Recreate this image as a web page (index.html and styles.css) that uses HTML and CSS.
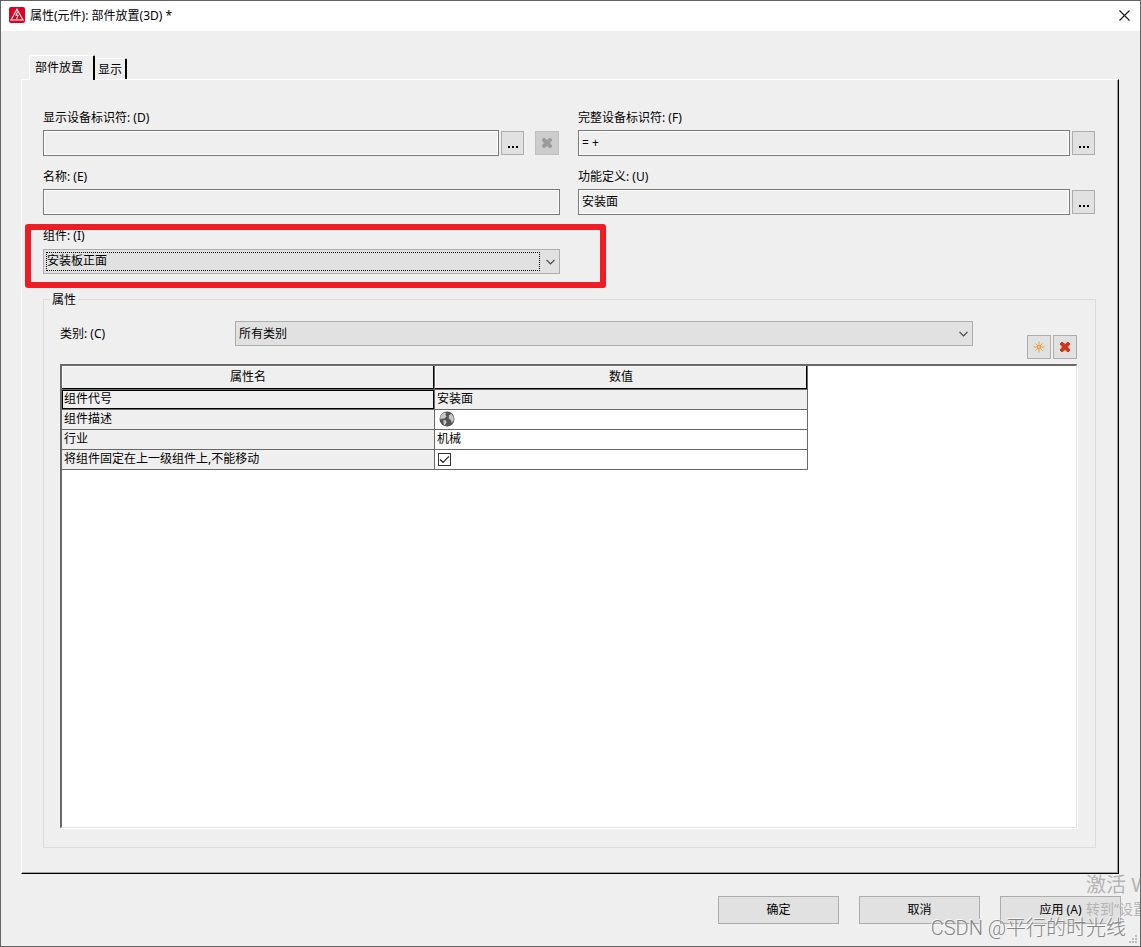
FILE: index.html
```html
<!DOCTYPE html>
<html lang="zh-CN">
<head>
<meta charset="utf-8">
<title>属性(元件): 部件放置(3D)</title>
<link rel="stylesheet" href="styles.css">
</head>
<body>
<main class="window">
  <header class="titlebar">
    <svg class="app-icon" viewBox="0 0 16 16" aria-hidden="true">
      <rect width="16" height="16" rx="2" fill="#e2001f"/>
      <path d="M8 2.2 14 13H2Z" fill="none" stroke="#fff" stroke-width="1.1"/>
      <path d="M8.800 4.500 6.800 8.300 9.200 8 7.600 12" fill="none" stroke="#fff"/>
    </svg>
    <h1 class="title">属性(元件): 部件放置(3D) *</h1>
    <button class="close" type="button" aria-label="关闭">
      <svg viewBox="0 0 11 11" aria-hidden="true"><path d="M.5.5l10 10M10.5.5l-10 10" stroke="#111" stroke-width="1.1"/></svg>
    </button>
  </header>

  <div class="tabs" role="tablist">
    <button class="tab tab-active" type="button" role="tab" aria-selected="true">部件放置</button>
    <button class="tab" type="button" role="tab" aria-selected="false">显示</button>
  </div>

  <section class="panel">
    <div class="fields">
      <div class="field">
        <label for="shown-id">显示设备标识符: (D)</label>
        <div class="control">
          <input class="textbox" id="shown-id" type="text" readonly>
          <button class="square browse" type="button" aria-label="浏览"><svg viewBox="0 0 10 2" aria-hidden="true"><path d="M0 0h2v2H0zM4 0h2v2H4zM8 0h2v2H8z"/></svg></button>
          <button class="square clear" type="button" aria-label="清除" disabled>
            <svg class="glyph" viewBox="0 0 12 12" aria-hidden="true"><path d="M3 1 6 3.5 9 1 11 3 8.5 6 11 9 9 11 6 8.5 3 11 1 9 3.5 6 1 3Z" fill="#9b9b9b" stroke="#9b9b9b"/></svg>
          </button>
        </div>
      </div>
      <div class="field">
        <label for="full-id">完整设备标识符: (F)</label>
        <div class="control">
          <input class="textbox" id="full-id" type="text" value="= +" readonly>
          <button class="square browse" type="button" aria-label="浏览"><svg viewBox="0 0 10 2" aria-hidden="true"><path d="M0 0h2v2H0zM4 0h2v2H4zM8 0h2v2H8z"/></svg></button>
        </div>
      </div>
      <div class="field">
        <label for="name">名称: (E)</label>
        <div class="control"><input class="textbox" id="name" type="text" readonly></div>
      </div>
      <div class="field">
        <label for="function">功能定义: (U)</label>
        <div class="control">
          <input class="textbox" id="function" type="text" value="安装面" readonly>
          <button class="square browse" type="button" aria-label="浏览"><svg viewBox="0 0 10 2" aria-hidden="true"><path d="M0 0h2v2H0zM4 0h2v2H4zM8 0h2v2H8z"/></svg></button>
        </div>
      </div>
      <div class="field marked">
        <label for="component">组件: (I)</label>
        <div class="control">
          <div class="dropdown dropdown-focus">
            <select id="component"><option>安装板正面</option></select>
            <svg class="chevron" viewBox="0 0 9 6" aria-hidden="true"><path d="M.5.8l4 4 4-4" fill="none" stroke="#444" stroke-width="1.2"/></svg>
          </div>
        </div>
      </div>
    </div>

    <div class="group" role="group" aria-labelledby="group-title">
      <h2 class="group-title" id="group-title">属性</h2>
      <div class="filter">
        <label for="category">类别: (C)</label>
        <div class="dropdown">
          <select id="category"><option>所有类别</option></select>
          <svg class="chevron" viewBox="0 0 9 6" aria-hidden="true"><path d="M.5.8l4 4 4-4" fill="none" stroke="#444" stroke-width="1.2"/></svg>
        </div>
        <div class="tools">
          <button class="square" type="button" aria-label="新建">
            <svg class="glyph" viewBox="0 0 12 12" aria-hidden="true"><path d="M6 .5v11M.5 6h11M2.5 2.5l7 7M9.5 2.5l-7 7" stroke="#e5a23c"/><circle cx="6" cy="6" r="2" fill="#e5a23c"/><circle cx="6" cy="6" r=".7" fill="#fff"/></svg>
          </button>
          <button class="square" type="button" aria-label="删除">
            <svg class="glyph" viewBox="0 0 12 12" aria-hidden="true"><path d="M3 1 6 3.5 9 1 11 3 8.5 6 11 9 9 11 6 8.5 3 11 1 9 3.5 6 1 3Z" fill="#cf341c" stroke="#cf341c"/></svg>
          </button>
        </div>
      </div>
      <div class="grid-box">
        <table class="props">
          <thead><tr><th scope="col">属性名</th><th scope="col">数值</th></tr></thead>
          <tbody>
            <tr><td class="key current">组件代号</td><td class="key">安装面</td></tr>
            <tr><td class="key">组件描述</td><td>
              <svg class="globe" viewBox="0 0 16 16" role="img" aria-label="多语言"><circle cx="8" cy="8" r="7.5" fill="#555"/><path d="M1.200 6 3 3 5.500 1.500 7 2 6.500 4 7.500 5.500 5.500 7.500 3.500 7.500 1.500 8.500ZM4.500 9 7 9.500 7.500 11.500 5.500 14.500 4.500 12ZM10 4 12.500 3 14.500 6 14.800 9 12.800 12 11.800 9 9.800 7.500Z" fill="#c8c8c8"/></svg>
            </td></tr>
            <tr><td class="key">行业</td><td>机械</td></tr>
            <tr><td class="key">将组件固定在上一级组件上,不能移动</td><td>
              <span class="check"><input type="checkbox" aria-label="将组件固定在上一级组件上,不能移动" checked><svg viewBox="0 0 13 13" aria-hidden="true"><path d="M2 6.500 5 9.300l6-6" fill="none" stroke="#222" stroke-width="1.2"/></svg></span>
            </td></tr>
          </tbody>
        </table>
      </div>
    </div>
  </section>

  <footer class="actions">
    <button class="action" type="button">确定</button>
    <button class="action" type="button">取消</button>
    <button class="action" type="button">应用 (A)</button>
  </footer>

  <div class="activation"><p class="activation-title">激活 W</p><p class="activation-text">转到“设置</p></div>
  <p class="credit">CSDN @平行的时光线</p>
  <svg class="grip" viewBox="0 0 8 8" aria-hidden="true"><path d="M6 0h2v2H6zM3 3h2v2H3zM6 3h2v2H6zM0 6h2v2H0zM3 6h2v2H3zM6 6h2v2H6z" fill="#bbb"/></svg>
</main>
</body>
</html>
```
FILE: styles.css
```css
* { box-sizing: border-box; }

body {
  margin: 0;
  background: #efefef;
  color: #000;
  font: 12px/18px "Noto Sans", "Noto Sans CJK SC", sans-serif;
}

button, input, select { font: inherit; color: inherit; }
button { padding: 0; }
svg { display: block; }
p { margin: 0; }

.window {
  position: relative;
  display: flex;
  flex-direction: column;
  min-height: 100vh;
  overflow: hidden;
  border: 1px solid #646464;
}

.titlebar {
  display: flex;
  align-items: center;
  gap: 5px;
  height: 30px;
  padding: 0 10px 2px 8px;
  background: #fff;
}
.app-icon { width: 16px; height: 16px; }
.title { flex: 1; margin: 0; padding-top: 2px; font-size: 12px; font-weight: normal; }
.close { border: 0; background: none; }
.close svg { width: 11px; height: 11px; }

.tabs {
  display: flex;
  align-items: flex-end;
  margin: 24px 21px 0 28px;
}
.tab {
  height: 21px;
  padding: 1px 3px 0;
  border: solid;
  border-width: 1px 2px 0 0;
  border-color: #fff #000 transparent transparent;
  border-radius: 0 2px 0 0;
  background: #efefef;
}
.tab-active {
  position: relative;
  height: 25px;
  margin-bottom: -1px;
  padding: 0 10px 0 5px;
  border-left: 1px solid #fff;
  border-radius: 3px 2px 0 0;
}

.panel {
  flex: 1;
  display: flex;
  flex-direction: column;
  margin: 0 21px 0 20px;
  padding: 28px 22px 25px 21px;
  border: 1px solid;
  border-color: #fff #000 #000 #fff;
  box-shadow: inset -1px -1px #a0a0a0;
}

.fields {
  display: grid;
  grid-template-columns: 1fr 1fr;
  gap: 11px 18px;
  padding-right: 1px;
}
.field { display: flex; flex-direction: column; gap: 4px; }
.field label { height: 18px; padding-top: 1px; }
.control { display: flex; align-items: center; gap: 2px; height: 26px; }
.textbox {
  flex: 1;
  min-width: 0;
  height: 26px;
  padding: 0 3px 2px;
  border: 1px solid #7a7a7a;
  border-radius: 0;
  outline: 0;
  background: #efefef;
  box-shadow: inset 0 0 0 1px #fff;
}
.square {
  display: grid;
  place-items: center;
  width: 24px;
  height: 24px;
  border: 1px solid #adadad;
  background: #e1e1e1;
}
.square:disabled { border-color: #bfbfbf; background: #ccc; }
.browse { width: 23px; padding-top: 8px; }
.browse svg { width: 10px; height: 2px; }
.clear { margin: 0 1px 0 9px; }
.glyph { width: 12px; height: 12px; }

.dropdown { position: relative; flex: 1; }
.dropdown select {
  display: block;
  appearance: none;
  width: 100%;
  height: 25px;
  padding: 0 24px 0 3px;
  border: 1px solid #adadad;
  border-radius: 0;
  background: #e1e1e1;
}
.chevron {
  position: absolute;
  top: 10px;
  right: 5px;
  width: 9px;
  height: 6px;
  pointer-events: none;
}
.dropdown-focus::after {
  content: "";
  position: absolute;
  inset: 3px 20px 3px 3px;
  border: 1px dotted #000;
  pointer-events: none;
}

/* red callout frame round the component field */
.marked { position: relative; }
.marked::after {
  content: "";
  position: absolute;
  inset: -2px -46px -14px -18px;
  border: 6px solid #ee1c24;
  border-radius: 3px;
  pointer-events: none;
}

.group {
  flex: 1;
  display: flex;
  flex-direction: column;
  margin-top: 25px;
  padding: 0 18px 19px 16px;
  border: 1px solid #dcdcdc;
}
.group-title {
  align-self: flex-start;
  margin: -9px 0 12px -10px;
  padding: 0 2px;
  background: #efefef;
  font-size: 12px;
  font-weight: normal;
}

.filter {
  display: grid;
  grid-template-columns: 175px 1fr auto;
  align-items: start;
  height: 43px;
}
.filter label { padding-top: 4px; }
.tools { display: flex; gap: 2px; margin: 14px 0 0 54px; }

.grid-box {
  flex: 1;
  border: solid;
  border-width: 2px 1px 1px 2px;
  border-color: #696969 #e3e3e3 #e3e3e3 #696969;
  background: #fff;
  box-shadow: 1px 1px #fff;
}
.props {
  width: 746px;
  table-layout: fixed;
  border-spacing: 0;
}
.props th, .props td {
  height: 20px;
  padding: 0 2px 1px;
  border: solid #696969;
  border-width: 0 1px 1px 0;
  line-height: 18px;
}
.props th {
  height: 24px;
  background: #efefef;
  box-shadow: inset -1px -1px #000, inset 1px 1px #fff;
  font-weight: normal;
}
.props .key { background: #efefef; }
.props .current { box-shadow: inset 0 0 0 1px #000; }
.globe { width: 16px; height: 16px; margin-left: 2px; }
.check { position: relative; display: block; width: 13px; height: 13px; }
.check input {
  display: block;
  appearance: none;
  width: 13px;
  height: 13px;
  margin: 0 0 0 1px;
  border: 1px solid #333;
  background: #fff;
}
.check svg { position: absolute; inset: 0 0 0 1px; width: 13px; height: 13px; pointer-events: none; }

.actions {
  display: flex;
  justify-content: flex-end;
  gap: 20px;
  padding: 22px 19px;
}
.action {
  width: 121px;
  height: 28px;
  border: 1px solid #adadad;
  background: #e1e1e1;
}

/* overlays */
.activation {
  position: absolute;
  right: -10px;
  bottom: 26px;
  width: 64px;
  color: #b4b4b4;
  white-space: nowrap;
  pointer-events: none;
}
.activation-title { font-size: 20px; line-height: 26px; }
.activation-text { font-size: 14px; line-height: 22px; }
.credit {
  position: absolute;
  right: 14px;
  bottom: 4px;
  color: #858585;
  font-family: Roboto, "Noto Sans CJK SC", sans-serif;
  font-size: 20px;
  font-weight: 300;
  line-height: 28px;
  text-shadow: -1px -1px #f8f8f8;
  pointer-events: none;
}
.grip { position: absolute; right: 3px; bottom: 3px; width: 8px; height: 8px; }
```
